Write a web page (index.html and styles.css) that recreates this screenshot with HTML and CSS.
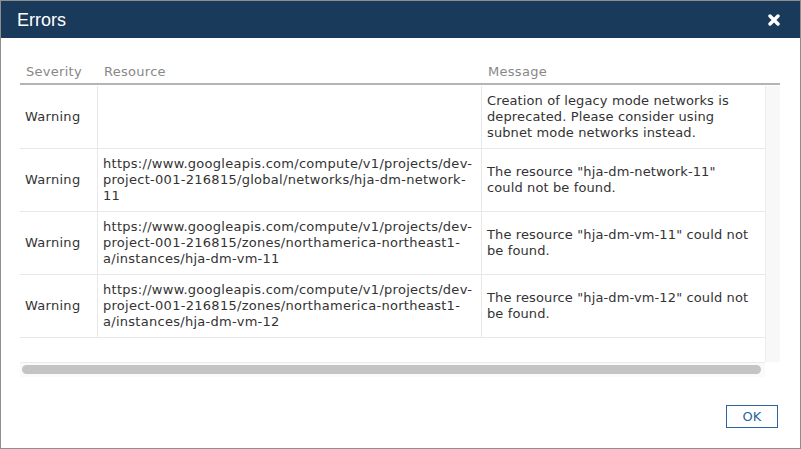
FILE: index.html
```html
<!DOCTYPE html>
<html>
<head>
<meta charset="utf-8">
<link rel="stylesheet" href="styles.css">
</head>
<body>
<div class="dialog">
  <div class="titlebar">
    <h1 class="title">Errors</h1>
    <button class="close" aria-label="Close">
      <svg width="12" height="12" viewBox="0 0 12 12"><path d="M2 2 L10 10 M10 2 L2 10" stroke="#fff" stroke-width="3.4" stroke-linecap="round" fill="none"/></svg>
    </button>
  </div>
  <div class="content">
    <div class="thead">
      <div class="th">Severity</div>
      <div class="th">Resource</div>
      <div class="th">Message</div>
      <div class="th"></div>
    </div>
    <div class="body-area">
      <div class="rows">
        <div class="row">
          <div class="cell sev">Warning</div>
          <div class="cell res"></div>
          <div class="cell msg">Creation of legacy mode networks is deprecated. Please consider using subnet mode networks instead.</div>
        </div>
        <div class="row">
          <div class="cell sev">Warning</div>
          <div class="cell res">https://www.googleapis.com/compute/v1/projects/dev-<wbr>project-001-216815/global/networks/hja-dm-network-<wbr>11</div>
          <div class="cell msg">The resource "hja-dm-network-11" could not be found.</div>
        </div>
        <div class="row">
          <div class="cell sev">Warning</div>
          <div class="cell res">https://www.googleapis.com/compute/v1/projects/dev-<wbr>project-001-216815/zones/northamerica-northeast1-<wbr>a/instances/hja-dm-vm-11</div>
          <div class="cell msg">The resource "hja-dm-vm-11" could not be found.</div>
        </div>
        <div class="row">
          <div class="cell sev">Warning</div>
          <div class="cell res">https://www.googleapis.com/compute/v1/projects/dev-<wbr>project-001-216815/zones/northamerica-northeast1-<wbr>a/instances/hja-dm-vm-12</div>
          <div class="cell msg">The resource "hja-dm-vm-12" could not be found.</div>
        </div>
      </div>
      <div class="vtrack"></div>
      <div class="htrack"><div class="thumb"></div></div>
      <div class="corner"></div>
    </div>
  </div>
  <div class="footer">
    <button class="ok">OK</button>
  </div>
</div>
</body>
</html>
```

FILE: styles.css
```css
* { box-sizing: border-box; }
html, body { margin: 0; padding: 0; background: #fff; }
body {
  font-family: "DejaVu Sans", Verdana, sans-serif;
  font-size: 13px;
  line-height: 16px;
  color: #333;
}
.dialog {
  width: 801px;
  height: 449px;
  border: 1px solid #8e8e8e;
  display: flex;
  flex-direction: column;
  background: #fff;
}
.titlebar {
  height: 37px;
  flex: none;
  background: #1a3a5c;
  display: flex;
  align-items: center;
  justify-content: space-between;
  padding: 0 20px 0 16px;
}
.title {
  margin: 0;
  font-family: "Liberation Sans", Arial, sans-serif;
  font-weight: normal;
  font-size: 18px;
  color: #fff;
  line-height: 20px;
}
.close {
  border: 0;
  background: none;
  padding: 0;
  width: 12px;
  height: 12px;
  display: flex;
}
.content {
  padding: 22px 0 0 19px;
  flex: none;
  letter-spacing: 0.28px;
}
.thead {
  width: 760px;
  display: grid;
  grid-template-columns: 77px 384px 284px 15px;
  border-bottom: 2px solid #b4b4b4;
}
.th {
  padding: 4px 6px 3px 6px;
  color: #888;
}
.th:nth-child(2), .th:nth-child(3) { padding-left: 7px; }
.body-area {
  margin-top: 1px;
  width: 760px;
  display: grid;
  grid-template-columns: 745px 15px;
  grid-template-rows: 276px 15px;
}
.rows { overflow: hidden; }
.row {
  display: grid;
  grid-template-columns: 77px 384px 284px;
  border-bottom: 1px solid #e8e8e8;
}
.cell {
  padding: 7px 5px;
  display: flex;
  align-items: center;
  min-height: 62px;
}
.res, .msg { border-left: 1px solid #e8e8e8; }
.res { display: block; }
.msg { padding-right: 13px; letter-spacing: 0.12px; }
.vtrack {
  background: #f8f8f8;
  border-left: 1px solid #ececec;
}
.htrack {
  background: #fafafa;
  border-top: 1px solid #ebebeb;
  padding: 2px 4px 0 2px;
}
.thumb {
  height: 9px;
  border-radius: 5px;
  background: #c4c4c4;
}
.corner { background: #fff; }
.footer {
  flex: 1;
  display: flex;
  justify-content: flex-end;
  align-items: flex-start;
  padding: 28px 22px 0 0;
}
.ok {
  width: 52px;
  height: 23px;
  border: 1px solid #2c64a0;
  background: #fff;
  color: #2c64a0;
  font-family: "DejaVu Sans", Verdana, sans-serif;
  font-size: 13px;
  padding: 0;
  line-height: 21px;
}
```
